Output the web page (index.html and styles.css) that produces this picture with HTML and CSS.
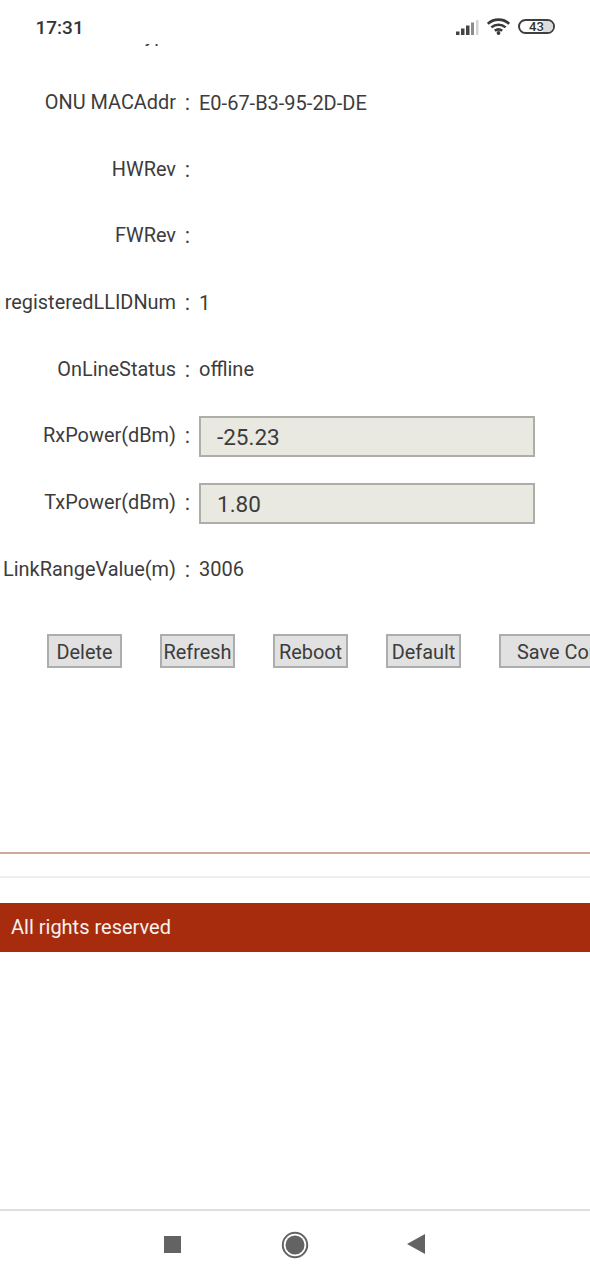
FILE: index.html
```html
<!DOCTYPE html>
<html>

<head>
    <meta name="viewport" content="width=device-width, initial-scale=1">
    <link rel="icon" href="data:,">
    <link rel="stylesheet" href="styles.css">
</head>

<body>
    <!-- Barra de estado -->
    <div class="statusbar">
        <span class="clock">17:31</span>
        <div class="status-icons">
            <svg class="signal" width="23" height="16" viewBox="0 0 23 16">
                <rect x="0" y="11.500" width="3.500" height="3.500" fill="#444"/>
                <rect x="5" y="8.500" width="3.500" height="6.500" fill="#444"/>
                <rect x="10" y="5.500" width="3.500" height="9.500" fill="#444"/>
                <rect x="15" y="2.500" width="3" height="12.500" fill="#8c8c8c"/>
                <rect x="20" y="0" width="2.500" height="15" fill="#d4d4d4"/>
            </svg>
            <svg class="wifi" width="23" height="17" viewBox="0 0 23 17">
                <path d="M.8 5.800C6.800 .2 16.200 .2 22.200 5.800" fill="none" stroke="#3a3a3a" stroke-width="2.600"/>
                <path d="M4.400 9.400C8.400 5.800 14.600 5.800 18.600 9.400" fill="none" stroke="#3a3a3a" stroke-width="2.600"/>
                <path d="M7.800 12.800C10 11 13 11 15.200 12.800" fill="none" stroke="#3a3a3a" stroke-width="2.600"/>
                <circle cx="11.500" cy="15" r="1.900" fill="#3a3a3a"/>
            </svg>
            <div class="battery"><div class="battery-level"></div><span class="battery-num">43</span></div>
        </div>
    </div>

    <div class="main">
        <div class="row"><div class="label">ONU Type</div><div class="colon">:</div><div class="value"></div></div>
        <div class="row"><div class="label">ONU MACAddr</div><div class="colon">:</div><div class="value">E0-67-B3-95-2D-DE</div></div>
        <div class="row"><div class="label">HWRev</div><div class="colon">:</div><div class="value"></div></div>
        <div class="row"><div class="label">FWRev</div><div class="colon">:</div><div class="value"></div></div>
        <div class="row"><div class="label">registeredLLIDNum</div><div class="colon">:</div><div class="value">1</div></div>
        <div class="row"><div class="label">OnLineStatus</div><div class="colon">:</div><div class="value">offline</div></div>
        <div class="row"><div class="label">RxPower(dBm)</div><div class="colon">:</div><div class="value"><div class="readonly">-25.23</div></div></div>
        <div class="row"><div class="label">TxPower(dBm)</div><div class="colon">:</div><div class="value"><div class="readonly">1.80</div></div></div>
        <div class="row"><div class="label">LinkRangeValue(m)</div><div class="colon">:</div><div class="value">3006</div></div>

        <div class="buttons">
            <button class="btn">Delete</button>
            <button class="btn">Refresh</button>
            <button class="btn">Reboot</button>
            <button class="btn">Default</button>
            <button class="btn btn-save">Save Config</button>
        </div>
    </div>

    <!-- Pie de pagina -->
    <div class="line-top"></div>
    <div class="line-bottom"></div>
    <div class="copyright">All rights reserved</div>

    <!-- Barra de navegacion -->
    <div class="navbar">
        <div class="nav-square"></div>
        <svg class="nav-circle" width="28" height="28" viewBox="0 0 28 28">
            <circle cx="14" cy="14" r="12.200" fill="none" stroke="#636363" stroke-width="2"/>
            <circle cx="14" cy="14" r="9.500" fill="#636363"/>
        </svg>
        <svg class="nav-back" width="18" height="20" viewBox="0 0 18 20">
            <path d="M0 10L18 0V20Z" fill="#636363"/>
        </svg>
    </div>
</body>

</html>
```

FILE: styles.css
```css
/* Estilos de la pagina */
html,
body {
    margin: 0;
    padding: 0;
    height: 1280px;
    overflow: hidden;
    background-color: #fff;
}

body {
    position: relative;
    width: 590px;
    font-family: Roboto, "Noto Sans", sans-serif;
    font-size: 19.900px;
    color: #3c3c3c;
}

.statusbar {
    position: absolute;
    top: 0;
    left: 0;
    width: 590px;
    height: 44px;
    background-color: #fff;
    z-index: 2;
}

.clock {
    position: absolute;
    left: 35.500px;
    top: 16px;
    font-size: 19px;
    line-height: 23px;
    font-weight: 500;
    color: #333;
}

.status-icons {
    position: absolute;
    top: 18px;
    left: 456px;
    display: flex;
    align-items: flex-start;
}

.signal {
    margin-top: 2px;
}

.wifi {
    margin-left: 8px;
}

.battery {
    position: relative;
    box-sizing: border-box;
    margin-left: 8px;
    margin-top: 1px;
    width: 37px;
    height: 15px;
    border: 2px solid #3f3f3f;
    border-radius: 8px;
    overflow: hidden;
}

.battery-level {
    position: absolute;
    top: 0;
    right: 0;
    bottom: 0;
    width: 10px;
    background-color: #dcdcdc;
}

.battery-num {
    position: absolute;
    top: -1px;
    left: 0;
    width: 100%;
    text-align: center;
    font-size: 13px;
    line-height: 13px;
    font-weight: 500;
    color: #333;
}

.main {
    padding-top: 2.500px;
    height: 850px;
    box-sizing: border-box;
}

.row {
    display: flex;
    align-items: center;
    height: 66.700px;
}

.label {
    width: 176px;
    flex-shrink: 0;
    text-align: right;
    white-space: nowrap;
}

.colon {
    width: 23px;
    flex-shrink: 0;
    text-align: center;
    font-size: 22px;
}

.value {
    flex: 1;
    font-size: 20px;
}

.readonly {
    box-sizing: border-box;
    width: 336px;
    height: 41px;
    margin-top: 1px;
    padding-left: 16px;
    background-color: #e9e8e1;
    border: 2px solid #aeaea8;
    font-size: 22.500px;
    line-height: 38px;
}

.buttons {
    display: flex;
    gap: 38px;
    margin-top: 31.500px;
    padding-left: 47px;
    white-space: nowrap;
}

.btn {
    box-sizing: border-box;
    flex-shrink: 0;
    width: 75px;
    height: 34px;
    padding: 2px 0 0;
    background-color: #e1e1e1;
    border: 2px solid #adadad;
    border-radius: 0;
    font-family: Roboto, "Noto Sans", sans-serif;
    font-size: 19.900px;
    color: #3c3c3c;
}

.btn-save {
    width: 141px;
}

.line-top {
    height: 2px;
    margin-top: 2px;
    background-color: #cfa99a;
}

.line-bottom {
    height: 2px;
    margin-top: 22px;
    background-color: #eeeeee;
}

.copyright {
    height: 49px;
    margin-top: 25px;
    padding-left: 11px;
    background-color: #a62c0d;
    color: #f6f1ee;
    font-size: 20px;
    line-height: 49px;
}

.navbar {
    position: absolute;
    left: 0;
    bottom: 0;
    width: 590px;
    height: 71px;
    border-top: 2px solid #dedede;
    box-sizing: border-box;
}

.nav-square {
    position: absolute;
    left: 164px;
    top: 25px;
    width: 17px;
    height: 17px;
    background-color: #636363;
}

.nav-circle {
    position: absolute;
    left: 281px;
    top: 20px;
}

.nav-back {
    position: absolute;
    left: 407px;
    top: 23px;
}
```
